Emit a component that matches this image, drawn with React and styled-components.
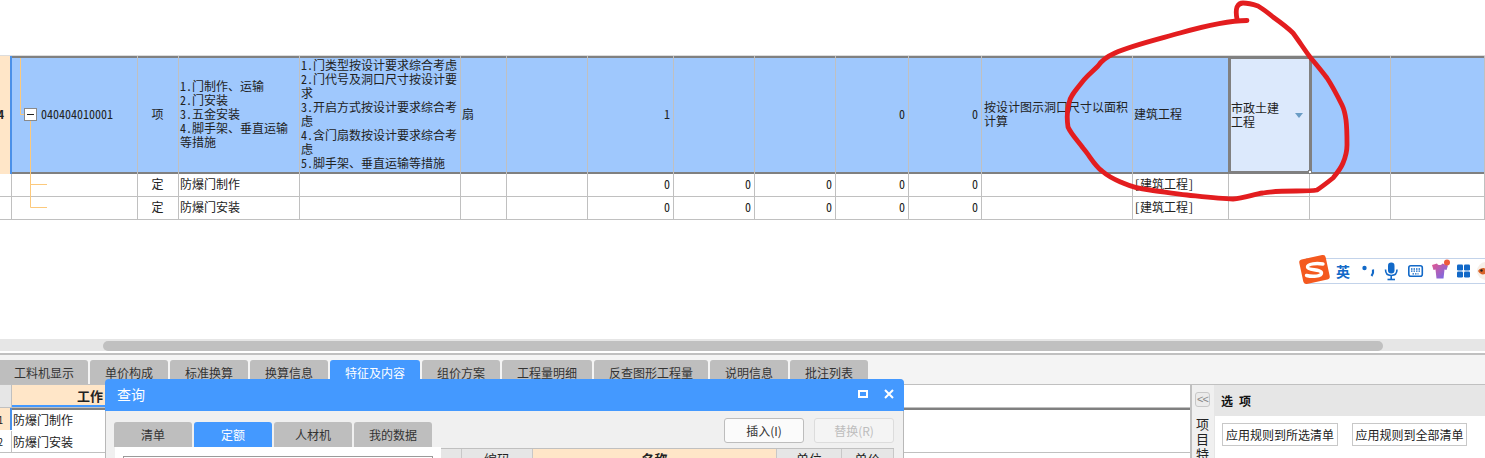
import React from "react";
import styled, { createGlobalStyle } from "styled-components";

const Global = createGlobalStyle`
  html, body { margin: 0; padding: 0; background: #fff; }
  * { box-sizing: border-box; }
  body { width: 1485px; height: 458px; overflow: hidden; }
`;

const gridFont = `"Noto Sans Mono CJK SC", "Noto Sans CJK SC", "Liberation Mono", monospace`;
const uiFont = `"Noto Sans CJK SC", "Liberation Sans", sans-serif`;
const columns = "12px 126px 41px 121px 161px 46px 81px 86px 81px 81px 73px 73px 151px 96px 81px 81px 94px";

const Page = styled.div`
  position: relative;
  width: 1485px;
  height: 458px;
  overflow: hidden;
  display: flex;
  flex-direction: column;
  font-family: ${uiFont};
  font-size: 12px;
  color: #222;
`;
const TopBlank = styled.div`
  height: 56px;
  flex: none;
  border-bottom: 1px solid #dcdcdc;
`;
const Grid = styled.div`
  position: relative;
  flex: none;
  font-family: ${gridFont};
  font-size: 12px;
  line-height: 14px;
`;
const Row = styled.div`
  display: grid;
  grid-template-columns: ${columns};
  height: ${(p) => p.$h}px;
  background: ${(p) => (p.$active ? "#9fc8fd" : "#fff")};
  border-bottom: ${(p) => (p.$active ? "0" : "1px solid #c0c0c0")};
  box-shadow: ${(p) => (p.$active ? "inset 0 2px 0 #808080, inset 0 -2px 0 #808080" : "none")};
`;
const Cell = styled.div`
  display: flex;
  align-items: center;
  justify-content: ${(p) => (p.$align === "right" ? "flex-end" : p.$align === "center" ? "center" : "flex-start")};
  padding: ${(p) =>
    p.$align === "right" ? "0 3px 2px 0" : p.$align === "center" ? "0 1px 2px 0" : "0 1px 2px 1px"};
  border-right: 1px solid #c0c0c0;
  min-width: 0;
`;
const HeadCell = styled(Cell)`
  background: ${(p) => (p.$active ? "#ffe6c8" : "#fff")};
  border-right: ${(p) => (p.$active ? "2px solid #4a90e8" : "1px solid #c0c0c0")};
  font-weight: 700;
  padding: 0 0 2px;
  overflow: hidden;
  justify-content: flex-end;
  & > span { margin-right: 6px; }
`;
const CodeCell = styled(Cell)`
  padding-left: 29px;
`;
const MeasureCell = styled(Cell)`
  padding-left: 2px;
`;
const SelectedCell = styled(Cell)`
  position: relative;
  background: #dce9fc;
  border: 3px solid #808080;
  padding: 0 22px 0 0;
  margin: 0 -2px 0 -1px;
  z-index: 1;
`;
const Arrow = styled.i`
  position: absolute;
  right: 6px;
  top: 54px;
  width: 0;
  height: 0;
  border-left: 4px solid transparent;
  border-right: 4px solid transparent;
  border-top: 5px solid #6a9cc4;
`;
const Handle = styled.i`
  position: absolute;
  right: -3px;
  bottom: -3px;
  width: 4px;
  height: 4px;
  background: #fff;
  border: 1px solid #808080;
`;
const Tree = styled.svg`
  position: absolute;
  left: 0;
  top: 0;
  z-index: 2;
  pointer-events: none;
`;
const Block = styled.div`
  width: 100%;
`;
const Spacer = styled.div`
  flex: 1;
`;
const ScrollTrack = styled.div`
  flex: none;
  height: 12px;
  background: #e6e6e6;
  padding: 2px 102px 0 103px;
`;
const ScrollThumb = styled.div`
  height: 10px;
  border-radius: 5px;
  background: #c0c0c0;
`;
const Divider = styled.div`
  flex: none;
  height: 4px;
  background: #fff;
  border-bottom: 2px solid #c0c0c0;
`;
const TabBar = styled.div`
  flex: none;
  height: 30px;
  padding-top: 5px;
  display: flex;
  gap: 2px;
  background: #f4f4f4;
  border-bottom: 1px solid #c0c0c0;
`;
const Tab = styled.div`
  width: ${(p) => p.$w}px;
  display: flex;
  align-items: center;
  justify-content: center;
  border-radius: 3px 3px 0 0;
  background: ${(p) => (p.$active ? "#4499ff" : "#bebebe")};
  color: ${(p) => (p.$active ? "#fff" : "#333")};
  font-size: 12px;
  padding-top: 1px;
  &:first-child { border-top-left-radius: 0; }
`;
const Lower = styled.div`
  flex: none;
  height: 73px;
  display: flex;
`;
const LeftPane = styled.div`
  flex: 1;
  font-family: ${gridFont};
  font-size: 12px;
`;
const WorkRow = styled.div`
  display: grid;
  grid-template-columns: 12px 93px;
  height: ${(p) => p.$h}px;
  border-bottom: 1px solid ${(p) => (p.$strong ? "#fff" : "#c0c0c0")};
  box-shadow: ${(p) => (p.$strong ? "inset 0 2px 0 #808080" : "none")};
`;
const WorkIndex = styled.div`
  background: ${(p) => p.$bg};
  border-right: ${(p) => (p.$blue ? "2px solid #4a90e8" : "1px solid #c0c0c0")};
  display: flex;
  align-items: center;
  justify-content: flex-end;
  overflow: hidden;
  font-size: 10px;
  padding-right: ${(p) => (p.$blue ? 7 : 8)}px;
`;
const WorkHead = styled.div`
  background: #ffe6c8;
  border-bottom: 2px solid #4499ff;
  text-align: right;
  font-weight: 700;
  font-size: 13px;
  line-height: 21px;
  padding-right: 2px;
  overflow: hidden;
`;
const WorkCell = styled.div`
  display: flex;
  align-items: center;
  padding-left: 1px;
`;
const RightPane = styled.div`
  width: 295px;
  flex: none;
  display: grid;
  grid-template-columns: 23px 1fr;
  border-left: 2px solid #c0c0c0;
`;
const SideStrip = styled.div`
  background: #f0f0f0;
  padding: 7px 0 0 3px;
  border-right: 1px solid #e6e6e6;
`;
const Collapse = styled.div`
  width: 15px;
  height: 15px;
  border: 1px solid #c8c8c8;
  border-radius: 3px;
  background: #ebebeb;
  color: #888;
  font: 11px/12px "Liberation Sans", sans-serif;
  text-align: center;
  letter-spacing: -1px;
`;
const SideText = styled.div`
  width: 15px;
  margin-top: 9px;
  font-family: ${gridFont};
  font-size: 13px;
  line-height: 15px;
  text-align: center;
  color: #222;
`;
const OptionBody = styled.div`
  display: flex;
  flex-direction: column;
`;
const OptionTitle = styled.div`
  height: 31px;
  flex: none;
  background: #e6e6e6;
  padding-left: 6px;
  display: flex;
  align-items: center;
  font-family: ${gridFont};
  font-weight: 700;
  font-size: 12px;
  color: #111;
`;
const OptionButtons = styled.div`
  display: flex;
  gap: 14px;
  padding: 7px 0 0 7px;
`;
const OptionButton = styled.div`
  height: 23px;
  width: ${(p) => p.$w}px;
  border: 1px solid #c8c8c8;
  background: #fff;
  display: flex;
  align-items: center;
  justify-content: center;
  font-family: ${gridFont};
  font-size: 12px;
`;
const Dialog = styled.div`
  position: absolute;
  left: 105px;
  top: 379px;
  width: 799px;
  height: 110px;
  background: #f0f0f0;
  border: 1px solid #b8b8b8;
  border-radius: 4px 4px 0 0;
  z-index: 5;
`;
const DialogHead = styled.div`
  height: 32px;
  margin: -1px -1px 0;
  background: #4499ff;
  border-radius: 4px 4px 0 0;
  color: #fff;
  font-size: 14px;
  display: flex;
  align-items: center;
  justify-content: space-between;
  padding: 0 10px 2px 12px;
`;
const WindowIcons = styled.div`
  display: flex;
  align-items: center;
  gap: 16px;
`;
const DialogTools = styled.div`
  display: flex;
  padding: 7px 9px 0 8px;
  align-items: flex-start;
`;
const DialogTabs = styled.div`
  display: flex;
  gap: 2px;
  padding-top: 4px;
  flex: 1;
`;
const DialogTab = styled.div`
  width: 78px;
  height: 25px;
  border-radius: 3px 3px 0 0;
  background: ${(p) => (p.$active ? "#4499ff" : "#bebebe")};
  color: ${(p) => (p.$active ? "#fff" : "#333")};
  display: flex;
  align-items: center;
  justify-content: center;
`;
const DialogButton = styled.div`
  width: 80px;
  height: 25px;
  margin-left: 10px;
  border: 1px solid ${(p) => (p.$disabled ? "#dcdcdc" : "#bdbdbd")};
  border-radius: 3px;
  background: ${(p) => (p.$disabled ? "#f4f4f4" : "#fbfbfb")};
  color: ${(p) => (p.$disabled ? "#bdbdbd" : "#333")};
  display: flex;
  align-items: center;
  justify-content: center;
`;
const DialogContent = styled.div`
  display: grid;
  grid-template-columns: 326px 1fr;
  margin: 0 9px 0 9px;
`;
const SearchPanel = styled.div`
  background: #fff;
  height: 40px;
  padding: 9px 0 0 8px;
`;
const SearchBox = styled.div`
  width: 310px;
  height: 20px;
  border: 1px solid #9a9a9a;
`;
const ResultHead = styled.div`
  display: grid;
  grid-template-columns: 21px 71px 244px 65px 1fr;
  height: 30px;
  margin-top: 1px;
  border-top: 1px solid #c0c0c0;
`;
const ResultCol = styled.div`
  background: ${(p) => (p.$peach ? "#ffe6c8" : "#e6e6e6")};
  border-right: 1px solid #c8c8c8;
  text-align: center;
  font-weight: ${(p) => (p.$bold ? 700 : 400)};
  font-size: 13px;
  line-height: 18px;
  padding-top: 1px;
`;
const Ink = styled.svg`
  position: absolute;
  left: 0;
  top: 0;
  z-index: 3;
  pointer-events: none;
`;
const ImeBar = styled.div`
  position: absolute;
  left: 1306px;
  top: 258px;
  width: 179px;
  height: 26px;
  background: #fff;
  border-top: 1px solid #c3d3ea;
  border-bottom: 1px solid #c3d3ea;
  z-index: 4;
  display: flex;
  align-items: center;
  padding-left: 30px;
  overflow: hidden;
  & > svg { flex: none; }
`;
const ImeLogo = styled.div`
  position: absolute;
  left: 1297px;
  top: 253px;
  z-index: 5;
`;
const ImeLang = styled.span`
  color: #1269c8;
  font-weight: 700;
  font-size: 14px;
  width: 26px;
  flex: none;
`;

const features = ["1.门制作、运输", "2.门安装", "3.五金安装", "4.脚手架、垂直运输等措施"];
const content = [
  "1.门类型按设计要求综合考虑",
  "2.门代号及洞口尺寸按设计要求",
  "3.开启方式按设计要求综合考虑",
  "4.含门扇数按设计要求综合考虑",
  "5.脚手架、垂直运输等措施",
];
const tabs = [
  ["工料机显示", 88], ["单价构成", 78], ["标准换算", 78], ["换算信息", 78], ["特征及内容", 90, true],
  ["组价方案", 78], ["工程量明细", 90], ["反查图形工程量", 114], ["说明信息", 78], ["批注列表", 78],
];
const inkPath =
  "M1247 20.5 C1232 20.5 1212 24 1180 33 C1155 40 1130 46 1115 53 C1106 57 1102 60 1098 66 C1092 72 1087 76 1083 81 C1076 90 1070 96 1069 103 C1067 110 1067 120 1068 127 C1071 134 1078 141 1083 148 C1090 156 1094 165 1102 171 C1110 178 1116 180 1123 183 C1132 187 1142 189 1150 190 C1165 192 1175 194 1187 195 C1205 197 1220 199 1233 199 C1245 198 1254 194 1263 193 C1275 191 1285 191 1296 191 C1304 191 1312 191 1317 190 C1323 186 1328 182 1333 178 C1338 172 1341 168 1343 163 C1346 156 1347 150 1347 145 C1347 135 1347 128 1346 120 C1345 113 1344 109 1342 105 C1337 95 1333 87 1327 78 C1321 70 1315 63 1310 57 C1304 49 1299 41 1293 33 C1287 27 1280 22 1273 17 C1267 12 1263 9 1258 6 C1252 4 1247 3 1243 3 C1239 3 1238 5 1237 7 C1236 10 1236 14 1237 19";

function NameLines({ items }) {
  return (
    <Block>
      {items.map((t) => (
        <div key={t}>{t}</div>
      ))}
    </Block>
  );
}

function ChildRow({ name }) {
  return (
    <Row $h={23}>
      <HeadCell />
      <Cell />
      <Cell $align="center">定</Cell>
      <Cell>{name}</Cell>
      <Cell />
      <Cell />
      <Cell />
      {[0, 1, 2, 3, 4].map((i) => (
        <Cell key={i} $align="right">0</Cell>
      ))}
      <Cell />
      <Cell>[建筑工程]</Cell>
      <Cell />
      <Cell />
      <Cell />
    </Row>
  );
}

export default function App() {
  return (
    <Page>
      <Global />
      <TopBlank />
      <Grid>
        <Row $h={118} $active>
          <HeadCell $active><span>4</span></HeadCell>
          <CodeCell>040404010001</CodeCell>
          <Cell $align="center">项</Cell>
          <Cell><NameLines items={features} /></Cell>
          <Cell><NameLines items={content} /></Cell>
          <Cell>扇</Cell>
          <Cell />
          <Cell $align="right">1</Cell>
          <Cell />
          <Cell />
          <Cell $align="right">0</Cell>
          <Cell $align="right">0</Cell>
          <MeasureCell>按设计图示洞口尺寸以面积计算</MeasureCell>
          <Cell>建筑工程</Cell>
          <SelectedCell>市政土建工程<Arrow /><Handle /></SelectedCell>
          <Cell />
          <Cell />
        </Row>
        <ChildRow name="防爆门制作" />
        <ChildRow name="防爆门安装" />
        <Tree width="60" height="164" viewBox="0 0 60 164" fill="none">
          <path d="M20.5 2V58.5H24M30.5 64V151.5M30.5 128.5H47M30.5 151.5H47" stroke="#fcc97c" />
          <rect x="24.5" y="52.5" width="12" height="12" fill="#fff" stroke="#8a8a8a" />
          <path d="M27 58.5H34" stroke="#222" />
        </Tree>
      </Grid>
      <Spacer />
      <ScrollTrack><ScrollThumb /></ScrollTrack>
      <Divider />
      <TabBar>
        {tabs.map(([t, w, a]) => (
          <Tab key={t} $w={w} $active={a}>{t}</Tab>
        ))}
      </TabBar>
      <Lower>
        <LeftPane>
          <WorkRow $h={23}>
            <WorkIndex $bg="#e6e6e6" />
            <WorkHead>工作</WorkHead>
          </WorkRow>
          <WorkRow $h={23} $strong>
            <WorkIndex $bg="#ffe6c8" $blue>1</WorkIndex>
            <WorkCell>防爆门制作</WorkCell>
          </WorkRow>
          <WorkRow $h={22}>
            <WorkIndex $bg="#fff">2</WorkIndex>
            <WorkCell>防爆门安装</WorkCell>
          </WorkRow>
        </LeftPane>
        <RightPane>
          <SideStrip>
            <Collapse>&lt;&lt;</Collapse>
            <SideText>项目特</SideText>
          </SideStrip>
          <OptionBody>
            <OptionTitle>选 项</OptionTitle>
            <OptionButtons>
              <OptionButton $w={116}>应用规则到所选清单</OptionButton>
              <OptionButton $w={115}>应用规则到全部清单</OptionButton>
            </OptionButtons>
          </OptionBody>
        </RightPane>
      </Lower>

      <Dialog>
        <DialogHead>
          <span>查询</span>
          <WindowIcons>
            <svg width="10" height="8" viewBox="0 0 10 8" fill="none">
              <rect x="1" y="1" width="8" height="6" stroke="#fff" strokeWidth="2" />
            </svg>
            <svg width="10" height="10" viewBox="0 0 10 10" fill="none">
              <path d="M1 1L9 9M9 1L1 9" stroke="#fff" strokeWidth="2" />
            </svg>
          </WindowIcons>
        </DialogHead>
        <DialogTools>
          <DialogTabs>
            <DialogTab>清单</DialogTab>
            <DialogTab $active>定额</DialogTab>
            <DialogTab>人材机</DialogTab>
            <DialogTab>我的数据</DialogTab>
          </DialogTabs>
          <DialogButton>插入(I)</DialogButton>
          <DialogButton $disabled>替换(R)</DialogButton>
        </DialogTools>
        <DialogContent>
          <SearchPanel><SearchBox /></SearchPanel>
          <ResultHead>
            <ResultCol />
            <ResultCol>编码</ResultCol>
            <ResultCol $peach $bold>名称</ResultCol>
            <ResultCol>单位</ResultCol>
            <ResultCol>单价</ResultCol>
          </ResultHead>
        </DialogContent>
      </Dialog>

      <Ink width="1485" height="210" viewBox="0 0 1485 210" fill="none">
        <path d={inkPath} stroke="#e31d1f" strokeWidth="4.8" strokeLinecap="round" strokeLinejoin="round" />
      </Ink>

      <ImeLogo>
        <svg width="35" height="33" viewBox="0 0 35 33">
          <rect x="4" y="4" width="27" height="25" rx="3" fill="#f4591f" transform="rotate(-12 17.5 16.5)" />
          <path d="M26 11C20 10 10.5 10.5 10.5 14C10.5 17.5 24.5 16 24.5 20C24.5 23.5 15.5 24 9.5 22.5" fill="none" stroke="#fff" strokeWidth="3.4" strokeLinecap="round" />
        </svg>
      </ImeLogo>
      <ImeBar>
        <ImeLang>英</ImeLang>
        <svg width="123" height="24" viewBox="0 0 123 24" fill="none">
          <circle cx="2.5" cy="9" r="2.2" fill="#1269c8" />
          <path d="M11 10.5C11.5 13 11 15 9.5 17" stroke="#1269c8" strokeWidth="2.2" />
          <rect x="26" y="3.5" width="6.5" height="11" rx="3.2" fill="#1269c8" />
          <path d="M23.5 10.5C23.5 14.5 26 16.5 29.2 16.5C32.4 16.5 35 14.5 35 10.5M29.2 16.5V20" stroke="#1269c8" strokeWidth="1.6" />
          <path d="M25.5 20.5H33" stroke="#1269c8" strokeWidth="1.6" />
          <rect x="46.8" y="6.8" width="13.5" height="10.5" rx="2" stroke="#1269c8" strokeWidth="1.6" />
          <path d="M49 10H58.5M49 12.2H58.5M50.5 14.8H56.5" stroke="#1269c8" strokeWidth="1.3" strokeDasharray="1.5 1" />
          <path d="M70 6L75 4.5C76 6.5 79 6.5 80.5 4.5L86 6.5L84.5 11L82.5 10.5L81.5 19.5H74.5L73.5 10.5L71.5 11Z" fill="url(#shirt)" />
          <circle cx="85" cy="3.5" r="3" fill="#ef5a3c" />
          <rect x="95" y="5.5" width="6" height="6" rx="1.3" fill="#1269c8" />
          <rect x="102" y="5.5" width="6" height="6" rx="1.3" fill="#1269c8" />
          <rect x="95" y="12.5" width="6" height="6" rx="1.3" fill="#1269c8" />
          <rect x="102" y="12.5" width="6" height="6" rx="1.3" fill="#1269c8" />
          <circle cx="124" cy="12" r="9" fill="#f6efe8" />
          <path d="M116 12C118 8.5 123 8.5 123 10L123 15C120 16 118 15 116 12Z" fill="#d9642a" />
          <circle cx="119.5" cy="11.5" r="1.2" fill="#222" />
          <defs>
            <linearGradient id="shirt" x1="0" y1="0" x2="1" y2="1">
              <stop offset="0" stopColor="#e5568f" />
              <stop offset="1" stopColor="#6a6cf0" />
            </linearGradient>
          </defs>
        </svg>
      </ImeBar>
    </Page>
  );
}
